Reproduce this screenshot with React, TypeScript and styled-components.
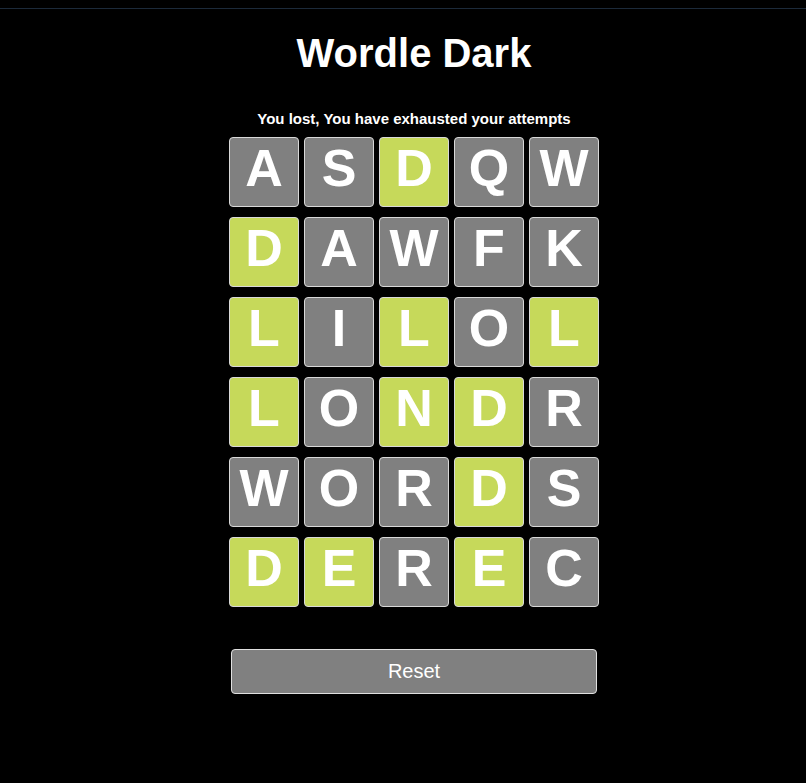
import React from "react";
import styled, { createGlobalStyle } from "styled-components";

const Global = createGlobalStyle`
  html, body { background: #000; }
  body { margin: 0; font-family: "Liberation Sans", Arial, sans-serif; color: #fff; }
`;

const TopLine = styled.div`
  height: 8px;
  border-bottom: 1px solid #1c2a3a;
`;

const Page = styled.main`
  display: flex;
  flex-direction: column;
  align-items: center;
  padding-left: 22px;
`;

const Title = styled.h1`
  margin: 21px 0 0;
  font-size: 40px;
  font-weight: 700;
  line-height: 46px;
`;

const Message = styled.p`
  margin: 34px 0 0;
  font-size: 15px;
  font-weight: 700;
  line-height: 18px;
`;

const Board = styled.div`
  margin-top: 9px;
  display: grid;
  grid-template-columns: repeat(5, 70px);
  grid-auto-rows: 70px;
  column-gap: 5px;
  row-gap: 10px;
`;

const Tile = styled.div<{ $hit: boolean }>`
  box-sizing: border-box;
  border: 1px solid #d8d8d8;
  border-radius: 4px;
  background: ${(p) => (p.$hit ? "#c6d95a" : "#808080")};
  display: flex;
  align-items: center;
  justify-content: center;
  padding-bottom: 8px;
  font-size: 52px;
  font-weight: 700;
  color: #fff;
`;

const ResetButton = styled.button`
  margin-top: 42px;
  width: 366px;
  height: 45px;
  box-sizing: border-box;
  background: #808080;
  border: 1px solid #e0e0e0;
  border-radius: 4px;
  color: #fff;
  font-family: "Liberation Sans", Arial, sans-serif;
  font-size: 20px;
`;

const rows: [string, string][] = [
  ["ASDQW", "00100"],
  ["DAWFK", "10000"],
  ["LILOL", "10101"],
  ["LONDR", "10110"],
  ["WORDS", "00010"],
  ["DEREC", "11010"],
];

export default function App() {
  return (
    <>
      <Global />
      <TopLine />
      <Page>
        <Title>Wordle Dark</Title>
        <Message>You lost, You have exhausted your attempts</Message>
        <Board>
          {rows.map(([word, mask], r) =>
            word.split("").map((ch, c) => (
              <Tile key={`${r}-${c}`} $hit={mask[c] === "1"}>
                {ch}
              </Tile>
            ))
          )}
        </Board>
        <ResetButton>Reset</ResetButton>
      </Page>
    </>
  );
}
